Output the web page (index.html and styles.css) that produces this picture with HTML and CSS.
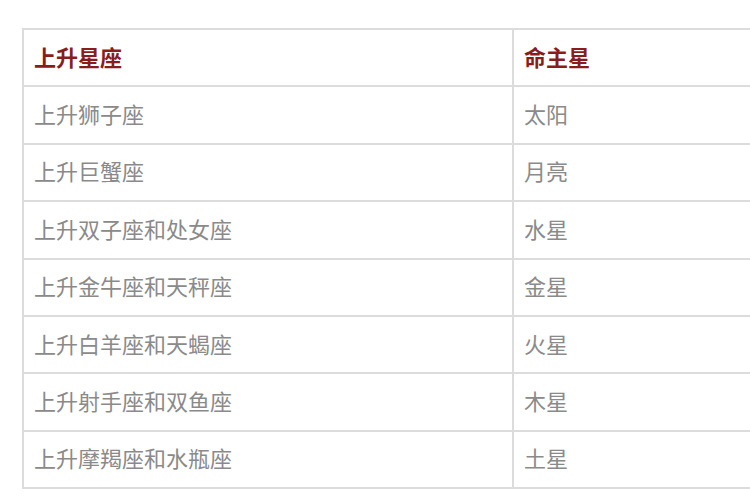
FILE: index.html
```html
<!DOCTYPE html>
<html lang="zh">
<head>
<meta charset="utf-8">
<link rel="stylesheet" href="styles.css">
</head>
<body>
<div class="wrap">
<table class="tbl">
<thead>
<tr><th class="c1">上升星座</th><th>命主星</th></tr>
</thead>
<tbody>
<tr><td>上升狮子座</td><td>太阳</td></tr>
<tr><td>上升巨蟹座</td><td>月亮</td></tr>
<tr><td>上升双子座和处女座</td><td>水星</td></tr>
<tr><td>上升金牛座和天秤座</td><td>金星</td></tr>
<tr><td>上升白羊座和天蝎座</td><td>火星</td></tr>
<tr><td>上升射手座和双鱼座</td><td>木星</td></tr>
<tr><td>上升摩羯座和水瓶座</td><td>土星</td></tr>
</tbody>
</table>
</div>
</body>
</html>
```
FILE: styles.css
```css
html, body {
  margin: 0;
  padding: 0;
  background: #ffffff;
  overflow: hidden;
  width: 750px;
  height: 500px;
}
.wrap {
  padding: 28px 0 0 22px;
}
.tbl {
  border-collapse: collapse;
  width: 760px;
  table-layout: fixed;
  font-family: "Noto Sans CJK SC", "Noto Sans", sans-serif;
  font-size: 22px;
}
.tbl th, .tbl td {
  border: 2px solid #dcdcdc;
  height: 51.4px;
  padding: 0 0 4px 10px;
  text-align: left;
  vertical-align: middle;
}
.tbl th.c1 {
  width: 478px;
}
.tbl th {
  color: #8a1c1c;
  font-weight: bold;
}
.tbl td {
  color: #8a8a8a;
  font-weight: normal;
}
```
